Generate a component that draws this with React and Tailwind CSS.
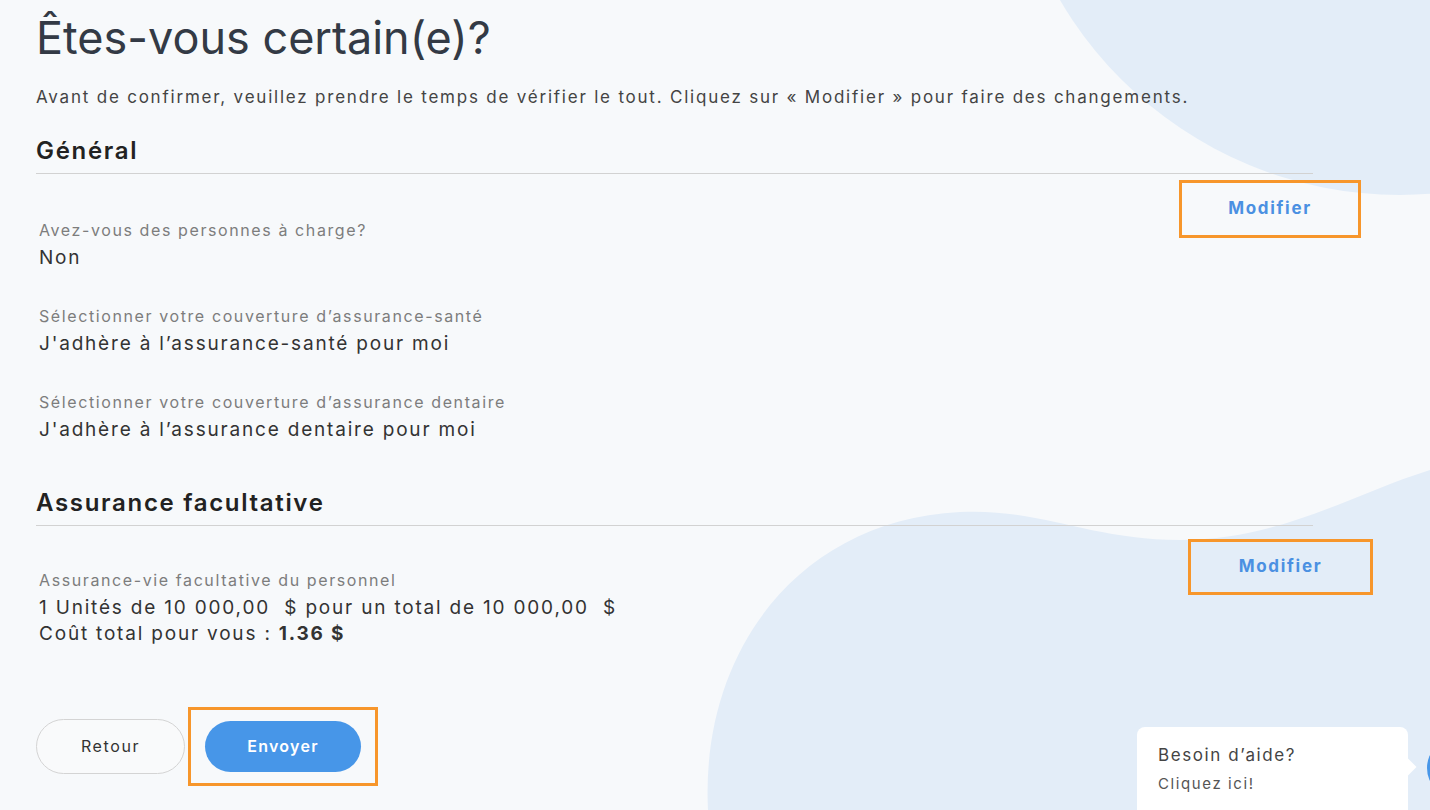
import React from 'react';

const font = { fontFamily: 'Inter, "Open Sans", sans-serif' };

const Field = ({ label, children }) => (
  <div className="pl-[3px]">
    <p className="text-[16px] leading-5 tracking-[0.1em] text-[#7d7d7d]">{label}</p>
    <div className="mt-[5px] text-[19px] leading-[26px] tracking-[0.095em] text-[#333]">{children}</div>
  </div>
);

const ModifierButton = ({ className }) => (
  <button className={`border-[3px] border-[#f7962b] text-[17px] font-bold tracking-[0.1em] text-[#4a90e2] ${className}`}>
    Modifier
  </button>
);

export default function App() {
  return (
    <div className="relative min-h-[810px] w-[1430px] overflow-hidden bg-[#f7f9fb]" style={font}>
      {/* background blobs */}
      <svg className="absolute inset-0" width="1430" height="810" viewBox="0 0 1430 810">
        <circle cx="1400" cy="-199" r="394" fill="#e3edf8" />
        <path
          d="M 708 810 C 700 650 800 520 960 512 C 1040 508 1090 540 1180 540 C 1280 540 1350 495 1430 470 L 1430 810 Z"
          fill="#e3edf8"
        />
      </svg>

      <div className="relative px-9 pt-[12px]">
        <h1 className="text-[45px] leading-[52px] text-[#333a45]">Êtes-vous certain(e)?</h1>
        <p className="mt-[21px] text-[17px] tracking-[0.105em] text-[#444]">
          Avant de confirmer, veuillez prendre le temps de vérifier le tout. Cliquez sur « Modifier » pour faire des changements.
        </p>

        {/* Général */}
        <section className="mt-[24px] w-[1277px]">
          <h2 className="text-[24px] font-semibold leading-8 tracking-[0.07em] text-[#222]">Général</h2>
          <div className="mt-[6px] border-t border-[#d2d2d2]" />
        </section>
        <div className="flex">
          <div className="flex flex-col gap-[35px] pt-[46px]">
            <Field label="Avez-vous des personnes à charge?">Non</Field>
            <Field label="Sélectionner votre couverture d’assurance-santé">J'adhère à l’assurance-santé pour moi</Field>
            <Field label="Sélectionner votre couverture d’assurance dentaire">J'adhère à l’assurance dentaire pour moi</Field>
          </div>
          <ModifierButton className="ml-auto mr-[33px] mt-[6px] h-[58px] w-[182px] self-start" />
        </div>

        {/* Assurance facultative */}
        <section className="mt-[44px] w-[1277px]">
          <h2 className="text-[24px] font-semibold leading-8 tracking-[0.07em] text-[#222]">Assurance facultative</h2>
          <div className="mt-[6px] border-t border-[#d2d2d2]" />
        </section>
        <div className="flex">
          <div className="pt-[44px]">
            <Field label="Assurance-vie facultative du personnel">
              <p className="leading-[26px]">1 Unités de 10 000,00&nbsp; $ pour un total de 10 000,00&nbsp; $</p>
              <p className="leading-[26px]">
                Coût total pour vous : <span className="font-bold">1.36 $</span>
              </p>
            </Field>
          </div>
          <ModifierButton className="ml-auto mr-[21px] mt-[13px] h-[56px] w-[185px] self-start" />
        </div>

        {/* Actions */}
        <div className="mt-[60px] flex items-center gap-[3px]">
          <button className="h-[55px] w-[149px] rounded-full border border-[#d4d4d4] bg-[#f9fafb] text-[16px] tracking-[0.1em] text-[#333]">
            Retour
          </button>
          <div className="border-[3px] border-[#f7962b] px-[14px] py-[11px]">
            <button className="h-[51px] w-[156px] rounded-full bg-[#4796e8] text-[16px] font-semibold tracking-[0.08em] text-white">
              Envoyer
            </button>
          </div>
        </div>
      </div>

      {/* help bubble */}
      <div className="absolute left-[1137px] top-[727px] h-[100px] w-[271px] rounded-lg bg-white px-[21px] pt-[16px] tracking-[0.1em]">
        <p className="text-[17px] text-[#444]">Besoin d’aide?</p>
        <p className="mt-[4px] text-[15px] text-[#555]">Cliquez ici!</p>
        <span className="absolute right-[-6px] top-[34px] h-3 w-3 rotate-45 bg-white" />
      </div>
      <div className="absolute left-[1427px] top-[738px] h-[60px] w-[60px] rounded-full bg-[#4796e8]" />
    </div>
  );
}
